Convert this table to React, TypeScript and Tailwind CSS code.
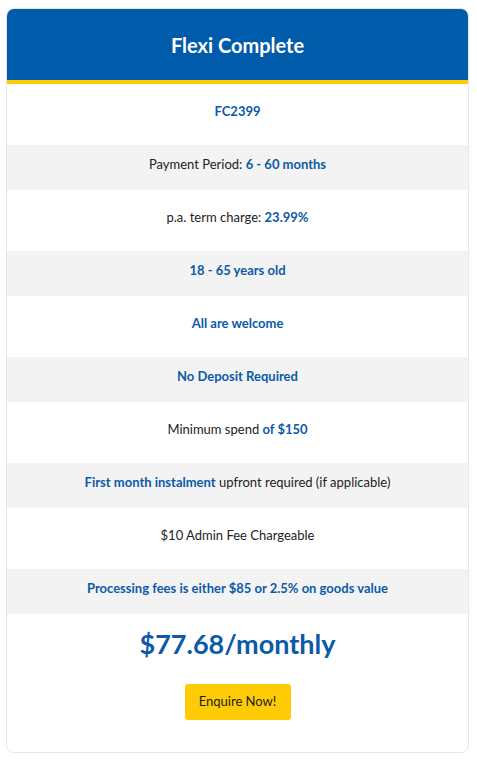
const rows: { grey: boolean; content: React.ReactNode }[] = [
  { grey: false, content: <b className="font-bold text-[#0b5aa8]">FC2399</b> },
  {
    grey: true,
    content: (
      <>
        Payment Period: <b className="font-bold text-[#0b5aa8]">6 - 60 months</b>
      </>
    ),
  },
  {
    grey: false,
    content: (
      <>
        p.a. term charge: <b className="font-bold text-[#0b5aa8]">23.99%</b>
      </>
    ),
  },
  { grey: true, content: <b className="font-bold text-[#0b5aa8]">18 - 65 years old</b> },
  { grey: false, content: <b className="font-bold text-[#0b5aa8]">All are welcome</b> },
  { grey: true, content: <b className="font-bold text-[#0b5aa8]">No Deposit Required</b> },
  {
    grey: false,
    content: (
      <>
        Minimum spend <b className="font-bold text-[#0b5aa8]">of $150</b>
      </>
    ),
  },
  {
    grey: true,
    content: (
      <>
        <b className="font-bold text-[#0b5aa8]">First month instalment</b> upfront required (if applicable)
      </>
    ),
  },
  { grey: false, content: <>$10 Admin Fee Chargeable</> },
  {
    grey: true,
    content: <b className="font-bold text-[#0b5aa8]">Processing fees is either $85 or 2.5% on goods value</b>,
  },
]

export default function App() {
  return (
    <div className="min-h-[760px] bg-white px-[6px] pt-[8px] font-['Lato',sans-serif]">
      <div className="w-[463px] overflow-hidden rounded-[8px] border border-[#e6e6e6] bg-white">
        <div className="box-content flex h-[71px] items-center justify-center border-b-4 border-[#ffcb05] bg-[#005baa]">
          <h1 className="text-[20px] font-bold text-white">Flexi Complete</h1>
        </div>
        <ul>
          {rows.map((row, i) => (
            <li
              key={i}
              className={
                row.grey
                  ? "h-[45px] bg-[#f3f3f3] pt-[11px] text-center text-[13px] leading-[16px] text-[#222]"
                  : "h-[61px] bg-white pt-[19px] text-center text-[13px] leading-[16px] text-[#222]"
              }
            >
              {row.content}
            </li>
          ))}
        </ul>
        <div className="flex h-[138px] flex-col items-center pt-[14px]">
          <p className="text-[27px] font-bold leading-[32px] text-[#0b5aa8]">$77.68/monthly</p>
          <button className="mt-[24px] h-[36px] w-[106px] rounded-[3px] bg-[#ffcb05] text-[13px] text-[#222]">
            Enquire Now!
          </button>
        </div>
      </div>
    </div>
  )
}
